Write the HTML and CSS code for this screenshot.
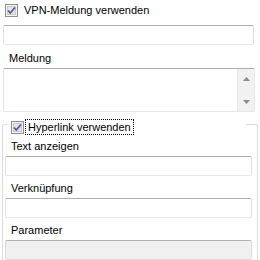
FILE: index.html
```html
<!DOCTYPE html>
<html>
<head>
<meta charset="utf-8">
<link rel="stylesheet" href="styles.css">
</head>
<body>
<div class="page">
  <div class="check first">
    <svg class="box" width="13" height="13" viewBox="0 0 13 13">
      <rect x="0.5" y="0.5" width="12" height="12" fill="#f4f4f4" stroke="#8e8f8f"/>
      <rect x="2.5" y="2.5" width="8" height="8" fill="#e4e4e4" stroke="#c9c9c9"/>
      <path d="M3 6.5 L5.3 9 L10 3.5" fill="none" stroke="#4a5f97" stroke-width="1.8"/>
    </svg>
    <span class="cap">VPN-Meldung verwenden</span>
  </div>
  <div class="field wide"></div>
  <div class="label meld">Meldung</div>
  <div class="area">
    <div class="area-body"></div>
    <div class="sb">
      <svg width="7" height="4" viewBox="0 0 7 4"><path d="M0 4 L3.5 0 L7 4 Z" fill="#8a8a8a"/></svg>
      <svg width="7" height="4" viewBox="0 0 7 4"><path d="M0 0 L3.5 4 L7 0 Z" fill="#8a8a8a"/></svg>
    </div>
  </div>
  <div class="group">
    <div class="legend">
      <svg class="box" width="13" height="13" viewBox="0 0 13 13">
        <rect x="0.5" y="0.5" width="12" height="12" fill="#f4f4f4" stroke="#8e8f8f"/>
        <rect x="2.5" y="2.5" width="8" height="8" fill="#e4e4e4" stroke="#c9c9c9"/>
        <path d="M3 6.5 L5.3 9 L10 3.5" fill="none" stroke="#4a5f97" stroke-width="1.8"/>
      </svg>
      <span class="cap focus">Hyperlink verwenden</span>
    </div>
    <div class="label l1">Text anzeigen</div>
    <div class="field inner"></div>
    <div class="label">Verknüpfung</div>
    <div class="field inner"></div>
    <div class="label">Parameter</div>
    <div class="field inner disabled"></div>
  </div>
</div>
</body>
</html>
```

FILE: styles.css
```css
html, body {
  margin: 0;
  padding: 0;
  background: #ffffff;
}
.page {
  width: 260px;
  height: 260px;
  overflow: hidden;
  font-family: "Liberation Sans", Arial, sans-serif;
  font-size: 11px;
  color: #000;
  display: flex;
  flex-direction: column;
}
.check {
  display: flex;
  align-items: center;
  height: 13px;
}
.check.first {
  margin: 4px 0 0 5px;
}
.box {
  display: block;
  flex: none;
}
.cap {
  margin-left: 6px;
  line-height: 13px;
}
.field {
  height: 18px;
  border: 1px solid #e3e9ef;
  border-top-color: #abadb3;
  border-left-color: #e2e3ea;
  border-right-color: #dbdfe6;
  border-radius: 2px;
  background: #fff;
}
.field.wide {
  margin: 8px 6px 0 3px;
}
.label {
  line-height: 13px;
  margin-left: 9px;
}
.label.meld {
  margin-top: 7px;
}
.area {
  margin: 3px 5px 0 3px;
  height: 42px;
  display: flex;
  border: 1px solid #e3e9ef;
  border-top-color: #abadb3;
  border-left-color: #e2e3ea;
  border-radius: 2px;
}
.area-body {
  flex: 1;
}
.sb {
  width: 17px;
  background: #f1f1f1;
  border-left: 1px solid #e8e8e8;
  display: flex;
  flex-direction: column;
  align-items: center;
  justify-content: space-between;
  padding: 8px 0 7px;
  box-sizing: border-box;
}
.sb svg {
  display: block;
}
.group {
  margin: 12px 2px 0 2px;
  border: 1px solid #d5dfe5;
  border-bottom: none;
  border-radius: 3px 3px 0 0;
  flex: 1;
  display: flex;
  flex-direction: column;
  padding: 0 5px 0 2px;
}
.group .label {
  margin-left: 6px;
  margin-top: 6px;
}
.group .label.l1 {
  margin-top: 5px;
}
.legend {
  display: flex;
  align-items: center;
  margin: -6px 6px 0 2px;
  padding-left: 4px;
  height: 16px;
  background: #fff;
}
.focus {
  margin-left: 1px;
  padding: 0 2px;
  line-height: 14px;
  border: 1px dotted #000;
}
.field.inner {
  margin-top: 3px;
}
.field.disabled {
  background: #f0f0f0;
  border-color: #dadada;
  border-top-color: #adb2b5;
}
```
